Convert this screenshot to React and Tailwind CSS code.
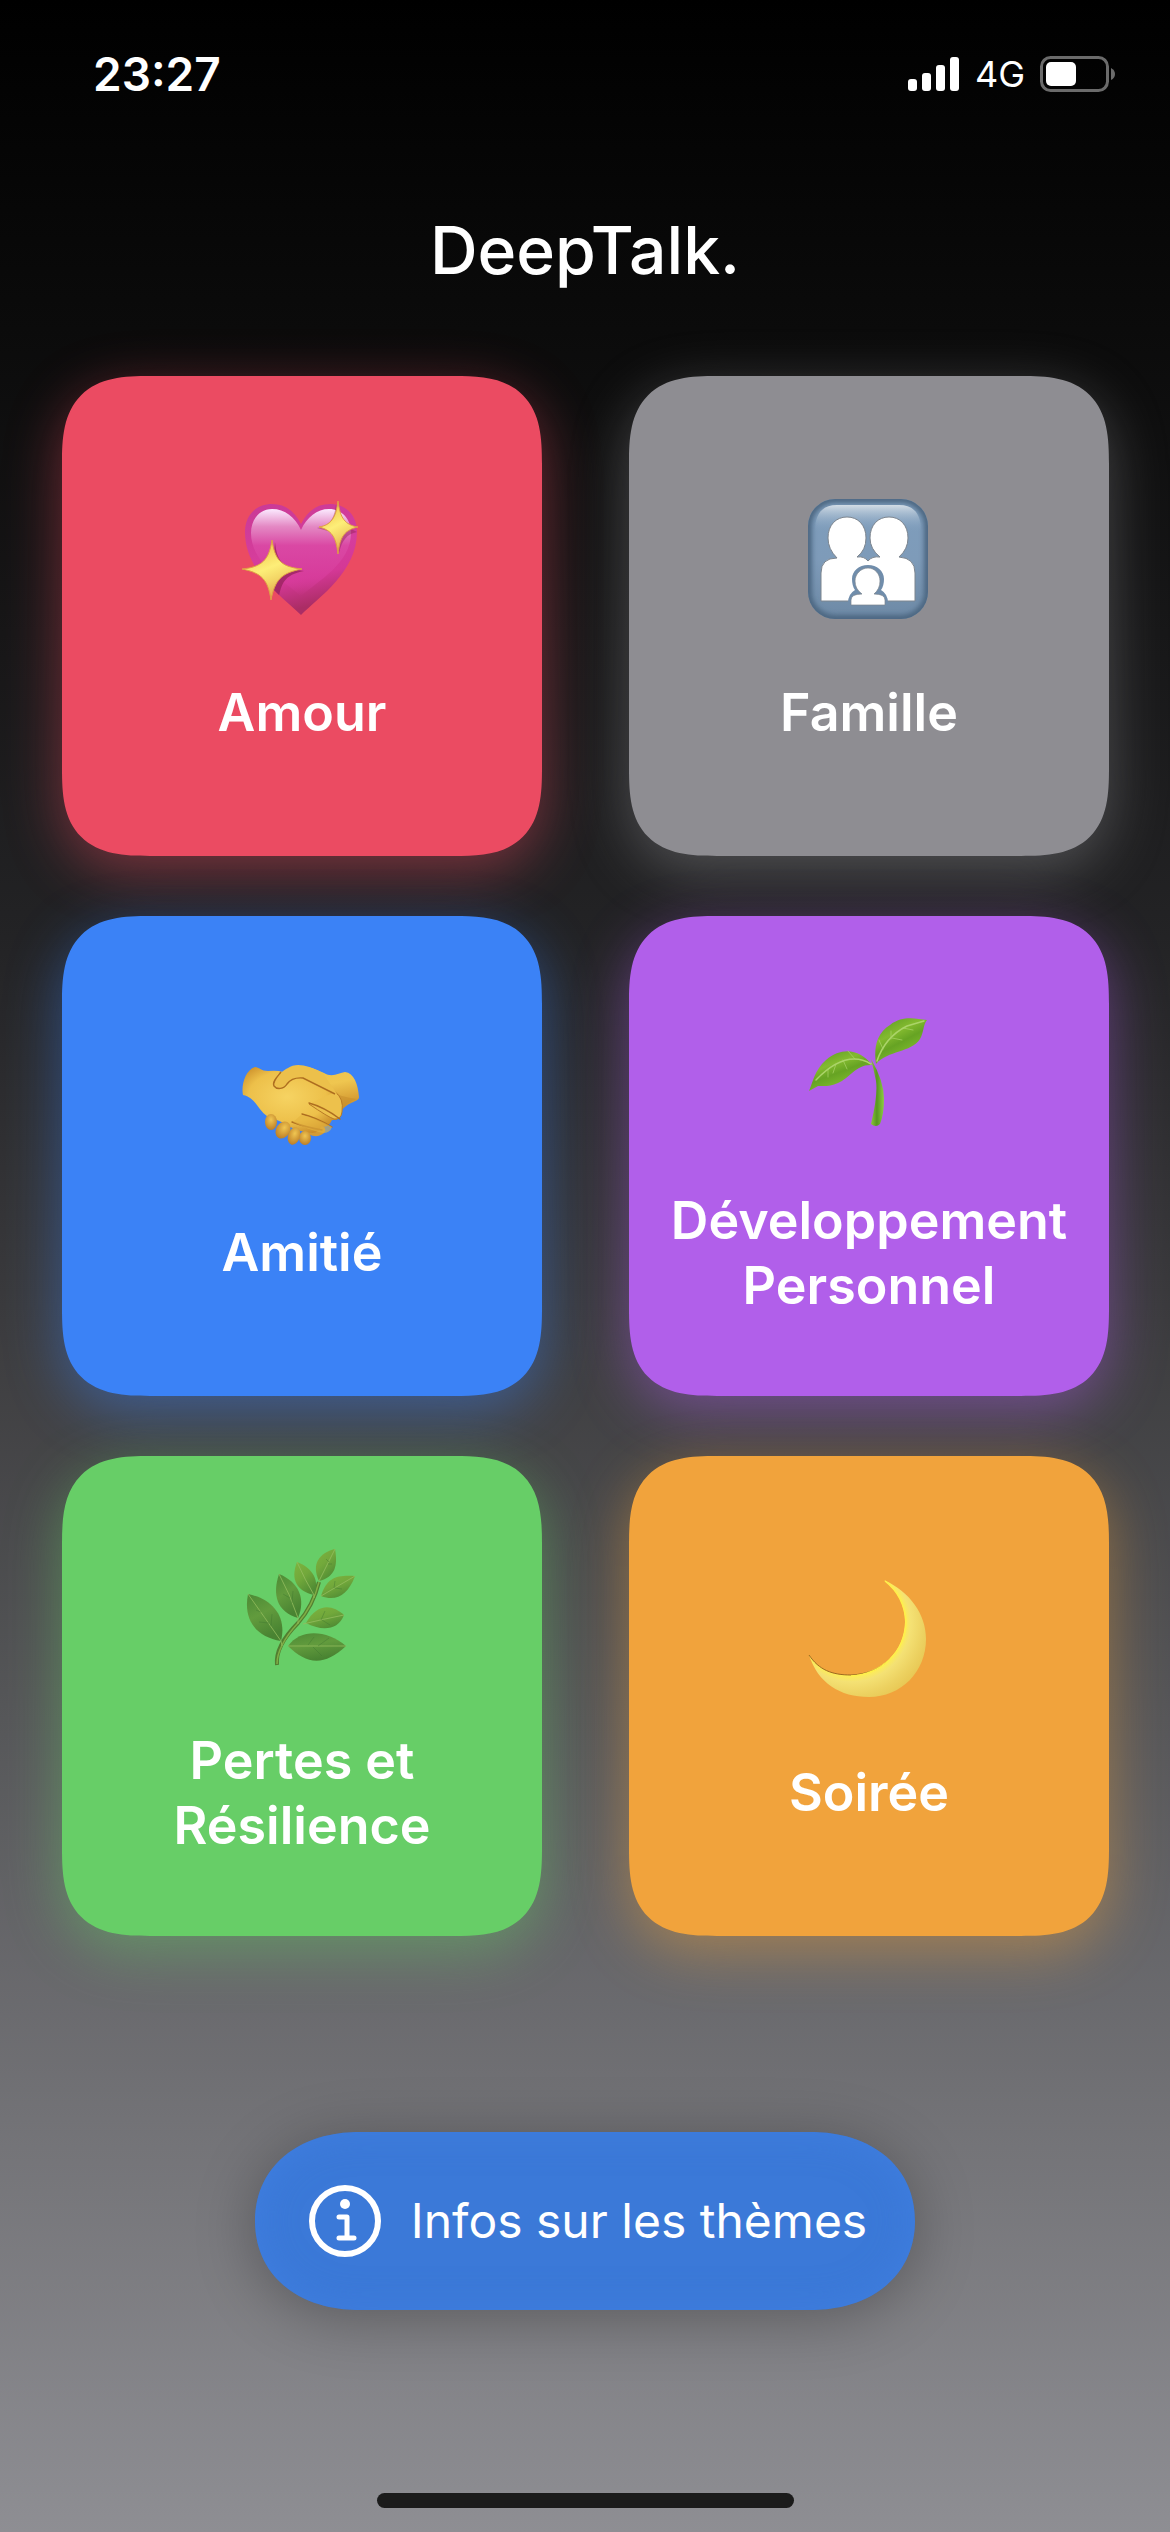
const FONT = "font-['Inter','Liberation_Sans',sans-serif]";

function SparklingHeart() {
    return (
        <svg viewBox="0 0 120 120" className="size-[120px]" aria-hidden="true">
            <defs>
                <linearGradient id="heart-fill" x1="0" y1="0" x2="0.25" y2="1">
                    <stop offset="0" stopColor="#c93a96" />
                    <stop offset="0.5" stopColor="#d63d9c" />
                    <stop offset="0.75" stopColor="#d43896" />
                    <stop offset="1" stopColor="#ab2d65" />
                </linearGradient>
                <linearGradient id="heart-shine" x1="0" y1="0" x2="0" y2="1">
                    <stop offset="0" stopColor="#fbeaff" />
                    <stop offset="0.2" stopColor="#e489c4" />
                    <stop offset="0.42" stopColor="#da48a4" />
                    <stop offset="0.8" stopColor="#d83d9d" stopOpacity="0.7" />
                    <stop offset="1" stopColor="#d83d9d" stopOpacity="0" />
                </linearGradient>
                <linearGradient id="star-fill" x1="0.3" y1="0" x2="0.7" y2="1">
                    <stop offset="0.2" stopColor="#f5d35c" />
                    <stop offset="0.45" stopColor="#fdee78" />
                    <stop offset="0.65" stopColor="#f3d565" />
                    <stop offset="1" stopColor="#dd8f45" />
                </linearGradient>
                <clipPath id="heart-clip">
                    <path d="M60 116C42 98 4 73 4 33C4 16 15 5 31 5C45 5 54 13 60 25C66 13 75 5 89 5C105 5 116 16 116 33C116 73 78 98 60 116Z" />
                </clipPath>
            </defs>
            <path d="M60 116C42 98 4 73 4 33C4 16 15 5 31 5C45 5 54 13 60 25C66 13 75 5 89 5C105 5 116 16 116 33C116 73 78 98 60 116Z" fill="url(#heart-fill)" />
            <path d="M60 97C43 82 10 64 10 34C10 20 19 10 31 10C44 10 54 18 60 31C66 18 76 10 88 10C101 10 110 20 110 34C110 64 77 82 60 97Z" fill="url(#heart-shine)" />
            <g clipPath="url(#heart-clip)" fill="#8c2052" opacity="0.65">
                <path d="M34 43C36 63 43 70 63 72C43 76 40 84 37 103L30 92Z" />
                <path d="M95 6C93 21 88 27 76 29L94 34C96 46 96 50 98 54C101 41 106 35 116 33L98 24Z" opacity="0.65" />
            </g>
            <path d="M31 41C34 61 40 68 61 70C40 74 34 81 30 101C27 81 21 74 1 70C21 68 28 61 31 41Z" fill="url(#star-fill)" stroke="#df9f45" strokeWidth="1" />
            <path d="M97 2C99 19 104 26 117 28C104 31 99 37 97 55C95 37 90 31 78 28C90 26 95 19 97 2Z" fill="url(#star-fill)" stroke="#df9f45" strokeWidth="1" />
        </svg>
    );
}

function Family() {
    return (
        <svg viewBox="0 0 120 120" className="size-[120px]" aria-hidden="true">
            <defs>
                <linearGradient id="family-bg" x1="0" y1="0" x2="0" y2="1">
                    <stop offset="0" stopColor="#7e9dbc" />
                    <stop offset="0.5" stopColor="#7e9bb9" />
                    <stop offset="1" stopColor="#6d89a5" />
                </linearGradient>
                <linearGradient id="family-shine" x1="0" y1="0" x2="0" y2="1">
                    <stop offset="0" stopColor="#d3dde6" />
                    <stop offset="1" stopColor="#86a3c0" stopOpacity="0" />
                </linearGradient>
                <filter id="family-soft">
                    <feGaussianBlur stdDeviation="2.5" />
                </filter>
                <clipPath id="family-clip">
                    <rect width="120" height="120" rx="27" />
                </clipPath>
            </defs>
            <rect width="120" height="120" rx="27" fill="url(#family-bg)" />
            <g clipPath="url(#family-clip)">
                <rect width="120" height="120" rx="27" fill="none" stroke="#4b6681" strokeWidth="8" filter="url(#family-soft)" />
            </g>
            <path d="M7 32Q7 6 29 6H91Q113 6 113 32Z" fill="url(#family-shine)" />
            <path d="M13 102V74Q13 59 29 59Q20 50 20 39C20 26 28 18 39 18S58 26 58 39Q58 51 49 58Q56 57 60 62Q64 57 72 58Q62 50 62 39C62 26 70 18 81 18S100 26 100 39Q100 50 91 58Q107 59 107 74V102Z" fill="#fff" stroke="#7d858e" strokeWidth="1" />
            <path d="M40 104Q40 95 47 91Q44 87 44 80C44 72 51 66 60 66S76 72 76 80Q76 87 73 91Q80 95 80 104Z" fill="#708dab" />
            <path d="M43 106V101Q43 95 54 95Q47 90 47 82C47 75 53 69 60 69S72 75 72 82Q72 90 66 95Q77 95 77 101V106Z" fill="#fff" stroke="#7d858e" strokeWidth="0.7" />
        </svg>
    );
}

function Handshake() {
    return (
        <svg viewBox="0 0 120 120" className="size-[120px]" aria-hidden="true">
            <defs>
                <linearGradient id="hand-a" x1="0" y1="0" x2="0.3" y2="1">
                    <stop offset="0" stopColor="#edc14a" />
                    <stop offset="0.5" stopColor="#efc650" />
                    <stop offset="1" stopColor="#cf922c" />
                </linearGradient>
                <radialGradient id="hand-b" cx="0.45" cy="0.45" r="0.6">
                    <stop offset="0" stopColor="#f6d362" />
                    <stop offset="0.65" stopColor="#edc04a" />
                    <stop offset="1" stopColor="#c98b28" />
                </radialGradient>
                <radialGradient id="finger" cx="0.5" cy="0.35" r="0.65">
                    <stop offset="0" stopColor="#f0c652" />
                    <stop offset="1" stopColor="#bd7e26" />
                </radialGradient>
            </defs>
            <path d="M47 34C52 27 62 26 71 29L83 34C91 39 98 34 104 33C113 34 117 45 118 58C118 63 108 62 100 72L91 75L60 55Z" fill="url(#hand-a)" />
            <path d="M100 72Q105 63 116 60Q100 58 88 52Z" fill="#c88f2d" opacity="0.6" />
            <path d="M80 85Q90 93 77 97Q68 98 66 92Z" fill="#d49b34" />
            <path d="M14 28C18 28 20 32 27 32Q36 31 42 33L49 40Q60 32 69 40L94 52C102 58 102 66 100 74Q99 82 91 81Q87 90 80 87Q79 94 71 94Q55 93 43 84L26 77C17 71 14 58 2 56C0 47 4 31 14 28Z" fill="url(#hand-b)" />
            <path d="M94 53Q103 59 101 73Q100 81 93 80Q87 78 68 65" fill="#edc14c" stroke="#b97a25" strokeWidth="1" />
            <g fill="none" stroke="#ae6e20" strokeWidth="1.4" strokeLinecap="round">
                <path d="M68 64Q83 68 99 80" />
                <path d="M61 75Q74 78 91 88" />
                <path d="M51 83Q64 88 81 91" />
            </g>
            <path d="M60 76Q74 78 91 88Q89 94 82 94Q70 92 52 83" fill="#e5b440" opacity="0.6" />
            <g fill="url(#finger)">
                <ellipse cx="30" cy="83" rx="6" ry="8" />
                <ellipse cx="42" cy="91" rx="7" ry="9" transform="rotate(32 42 91)" />
                <ellipse cx="53" cy="97" rx="6" ry="9" transform="rotate(18 53 97)" />
                <ellipse cx="64" cy="99" rx="6" ry="7" />
            </g>
            <path d="M47 29C42 31 34 39 32 43C31 50 39 52 44 48C51 41 52 40 59 40Q64 39 70 42C82 50 90 55 96 55L82 34Q58 21 47 29Z" fill="#ecc04b" />
            <path d="M40 33C36 38 31 43 33 47C36 51 43 50 46 45Q51 38 62 39Q74 45 94 55" fill="none" stroke="#ae6e20" strokeWidth="1.4" />
        </svg>
    );
}

function Seedling() {
    return (
        <svg viewBox="0 0 120 120" className="size-[120px]" aria-hidden="true">
            <defs>
                <linearGradient id="seed-leaf" x1="0" y1="0" x2="0.6" y2="1">
                    <stop offset="0" stopColor="#559522" />
                    <stop offset="0.4" stopColor="#83ba2f" />
                    <stop offset="0.6" stopColor="#66a323" />
                    <stop offset="1" stopColor="#8ac534" />
                </linearGradient>
                <linearGradient id="seed-stem" x1="0" y1="0" x2="1" y2="0">
                    <stop offset="0" stopColor="#8cc739" />
                    <stop offset="0.45" stopColor="#589620" />
                    <stop offset="1" stopColor="#8cce42" />
                </linearGradient>
            </defs>
            <path d="M63 52Q76 74 76 92Q76 107 72 117Q68 121 63 117Q70 88 68 74Q66 64 63 52Z" fill="url(#seed-stem)" />
            <path d="M64 58C48 57 42 71 30 76C22 80 15 79 10 79L1 84C5 75 6 64 18 53C35 39 52 43 64 58Z" fill="url(#seed-leaf)" />
            <path d="M68 57C66 44 67 27 82 18C95 8 108 12 119 13C115 18 116 25 112 32C103 46 80 43 68 57Z" fill="url(#seed-leaf)" />
            <g fill="none" stroke="#abd469" strokeLinecap="round">
                <path d="M63 57Q38 42 8 73" strokeWidth="1.5" />
                <path d="M69 54Q77 30 99 19L116 14" strokeWidth="1.5" />
                <path d="M47 52L40 44M28 57L25 66M20 62L20 70M35 53L39 62M75 42L71 33M83 32L83 24M84 31L94 33M95 21L105 23" strokeWidth="0.7" />
            </g>
        </svg>
    );
}

function Herb() {
    return (
        <svg viewBox="0 0 120 120" className="size-[120px]" aria-hidden="true">
            <defs>
                <linearGradient id="herb-dark" x1="0" y1="0" x2="0.4" y2="1">
                    <stop offset="0" stopColor="#4b8a35" />
                    <stop offset="0.5" stopColor="#629b3d" />
                    <stop offset="1" stopColor="#498332" />
                </linearGradient>
                <linearGradient id="herb-light" x1="0" y1="0" x2="0.6" y2="1">
                    <stop offset="0" stopColor="#7cb43f" />
                    <stop offset="0.5" stopColor="#72a83b" />
                    <stop offset="1" stopColor="#508c34" />
                </linearGradient>
            </defs>
            <path d="M36 118Q34 99 57 76Q72 59 78 35" fill="none" stroke="#527e30" strokeWidth="4" />
            <path d="M36 117Q36 99 57 76Q72 59 78 35" fill="none" stroke="#80ad45" strokeWidth="1.5" />
            <g fill="url(#herb-dark)">
                <path d="M7 47C32 52 46 70 40 94C15 90 2 73 7 47Z" />
                <path d="M47 99C60 81 86 83 105 99C83 120 65 117 47 99Z" />
                <path d="M38 27C58 35 65 52 57 71C36 65 31 48 38 27Z" />
            </g>
            <g fill="url(#herb-light)">
                <path d="M56 15C72 21 79 34 73 48C56 44 49 33 56 15Z" />
                <path d="M78 34C70 17 78 6 94 2C97 19 94 30 78 34Z" />
                <path d="M80 49C86 30 96 28 114 29C107 48 95 55 80 49Z" />
                <path d="M65 76C76 56 91 57 103 68C97 84 80 84 65 76Z" />
            </g>
            <path d="M7 47Q24 71 40 94L41 99M47 99H105M38 27Q49 47 57 71V77M56 15Q64 33 73 48V51M78 34L94 2M80 49L114 29M62 77Q83 72 103 68" fill="none" stroke="#94bd5e" strokeWidth="0.8" />
            <path d="M20 65L15 63M28 76L18 75M30 79L31 67M67 98L73 90M77 99L88 91M72 100L81 109M49 51L42 47M51 56L52 44M88 15L85 12M87 17L91 17M93 41L94 34M94 41L101 42M80 73L84 64M81 73L89 78" fill="none" stroke="#3f7730" strokeWidth="0.6" opacity="0.7" />
        </svg>
    );
}

function Moon() {
    return (
        <svg viewBox="0 0 120 120" className="size-[120px]" aria-hidden="true">
            <defs>
                <radialGradient id="moon-fill" gradientUnits="userSpaceOnUse" cx="43" cy="43" r="92">
                    <stop offset="0.57" stopColor="#fff04e" />
                    <stop offset="0.65" stopColor="#f4e174" />
                    <stop offset="0.8" stopColor="#ecd160" />
                    <stop offset="1" stopColor="#e4bf49" />
                </radialGradient>
            </defs>
            <path d="M76 1C102 13 118 35 118 60C118 93 93 118 61 118C32 118 10 104 1 76C11 91 24 96 43 96C74 94 96 73 97 43C97 27 91 13 76 1Z" fill="url(#moon-fill)" />
            <path d="M1 76C11 91 24 96 43 96C61 95 73 89 82 80" fill="none" stroke="#9c6a20" strokeWidth="1" />
            <path d="M43 97C74 95 97 73 98 43C97 27 91 13 77 2" fill="none" stroke="#fff04a" strokeWidth="1.5" />
        </svg>
    );
}

const themes = [
    { name: 'Amour', Icon: SparklingHeart, color: 'bg-[#eb4b62] shadow-[0_15px_56px_rgba(235,75,98,0.45)]' },
    { name: 'Famille', Icon: Family, color: 'bg-[#8e8d92] shadow-[0_15px_56px_rgba(142,141,146,0.45)]' },
    { name: 'Amitié', Icon: Handshake, color: 'bg-[#3b82f6] shadow-[0_15px_56px_rgba(59,130,246,0.45)]' },
    { name: 'Développement Personnel', Icon: Seedling, color: 'bg-[#b15fea] shadow-[0_15px_56px_rgba(177,95,234,0.45)]' },
    { name: 'Pertes et Résilience', Icon: Herb, color: 'bg-[#67ce67] shadow-[0_15px_56px_rgba(103,206,103,0.45)]' },
    { name: 'Soirée', Icon: Moon, color: 'bg-[#f1a33c] shadow-[0_15px_56px_rgba(241,163,60,0.45)]' },
];

function ThemeCard({ name, Icon, color }) {
    return (
        <button
            type="button"
            className={`flex aspect-square flex-col items-center justify-center rounded-[88px] px-9 text-white [corner-shape:superellipse(1.5)] ${color}`}
        >
            <span className="mt-3 mr-0.5 mb-[61px]">
                <Icon />
            </span>
            <span className="text-[52px] leading-[65px] font-semibold">{name}</span>
        </button>
    );
}

function StatusBar() {
    return (
        <header className="flex h-[148px] items-center justify-between pr-[54px] pl-[93px]">
            <time className="text-[46px] leading-none font-semibold">23:27</time>
            <div className="flex items-center gap-[15px]">
                <svg viewBox="0 0 52 34" className="h-[34px] w-[52px]" fill="#fff" aria-hidden="true">
                    <rect x="0" y="22" width="9" height="12" rx="3" />
                    <rect x="14" y="16" width="9" height="18" rx="3" />
                    <rect x="28" y="8" width="9" height="26" rx="3" />
                    <rect x="42" y="0" width="9" height="34" rx="3" />
                </svg>
                <span className="text-[36px] leading-none">4G</span>
                <svg viewBox="0 0 76 36" className="h-9 w-[76px]" aria-hidden="true">
                    <rect x="1.5" y="1.5" width="66" height="33" rx="9" fill="none" stroke="#6b6b6b" strokeWidth="3" />
                    <rect x="6" y="6" width="30" height="24" rx="5" fill="#fff" />
                    <path d="M71 12Q75 14 75 18T71 24Z" fill="#6b6b6b" />
                </svg>
            </div>
        </header>
    );
}

export default function App() {
    return (
        <div
            className={`flex min-h-screen flex-col bg-[linear-gradient(to_bottom,#000,#0b0b0b_13%,#232325_37%,#3a3a3c_51%,#8e8e93)] text-white ${FONT}`}
        >
            <StatusBar />
            <h1 className="mt-[60px] text-center text-[66px] leading-[84px] font-medium">DeepTalk.</h1>

            <main className="mt-[84px] flex flex-1 flex-col items-center">
                <div className="grid w-full grid-cols-2 gap-x-[87px] gap-y-[60px] pr-[61px] pl-[62px]">
                    {themes.map((theme) => (
                        <ThemeCard key={theme.name} {...theme} />
                    ))}
                </div>

                <button
                    type="button"
                    className="mt-[196px] flex h-[178px] items-center gap-[30px] rounded-[104px/89px] bg-[#3b79d8] pr-12 pl-[54px] text-[48px] shadow-[0_8px_60px_rgba(0,0,0,0.28),inset_0_0_36px_rgba(68,132,232,0.5)] [corner-shape:superellipse(1.1)]"
                >
                    <svg viewBox="0 0 72 72" className="size-[72px]" fill="none" stroke="#fff" aria-hidden="true">
                        <circle cx="36" cy="36" r="33" strokeWidth="6" />
                        <circle cx="36" cy="19" r="5" fill="#fff" stroke="none" />
                        <path d="M30 32H38V53M30 53H45" strokeWidth="5" strokeLinecap="round" strokeLinejoin="round" />
                    </svg>
                    Infos sur les thèmes
                </button>
            </main>

            <div className="mx-auto mb-6 h-[15px] w-[417px] rounded-full bg-[#1b1b1b]" />
        </div>
    );
}
